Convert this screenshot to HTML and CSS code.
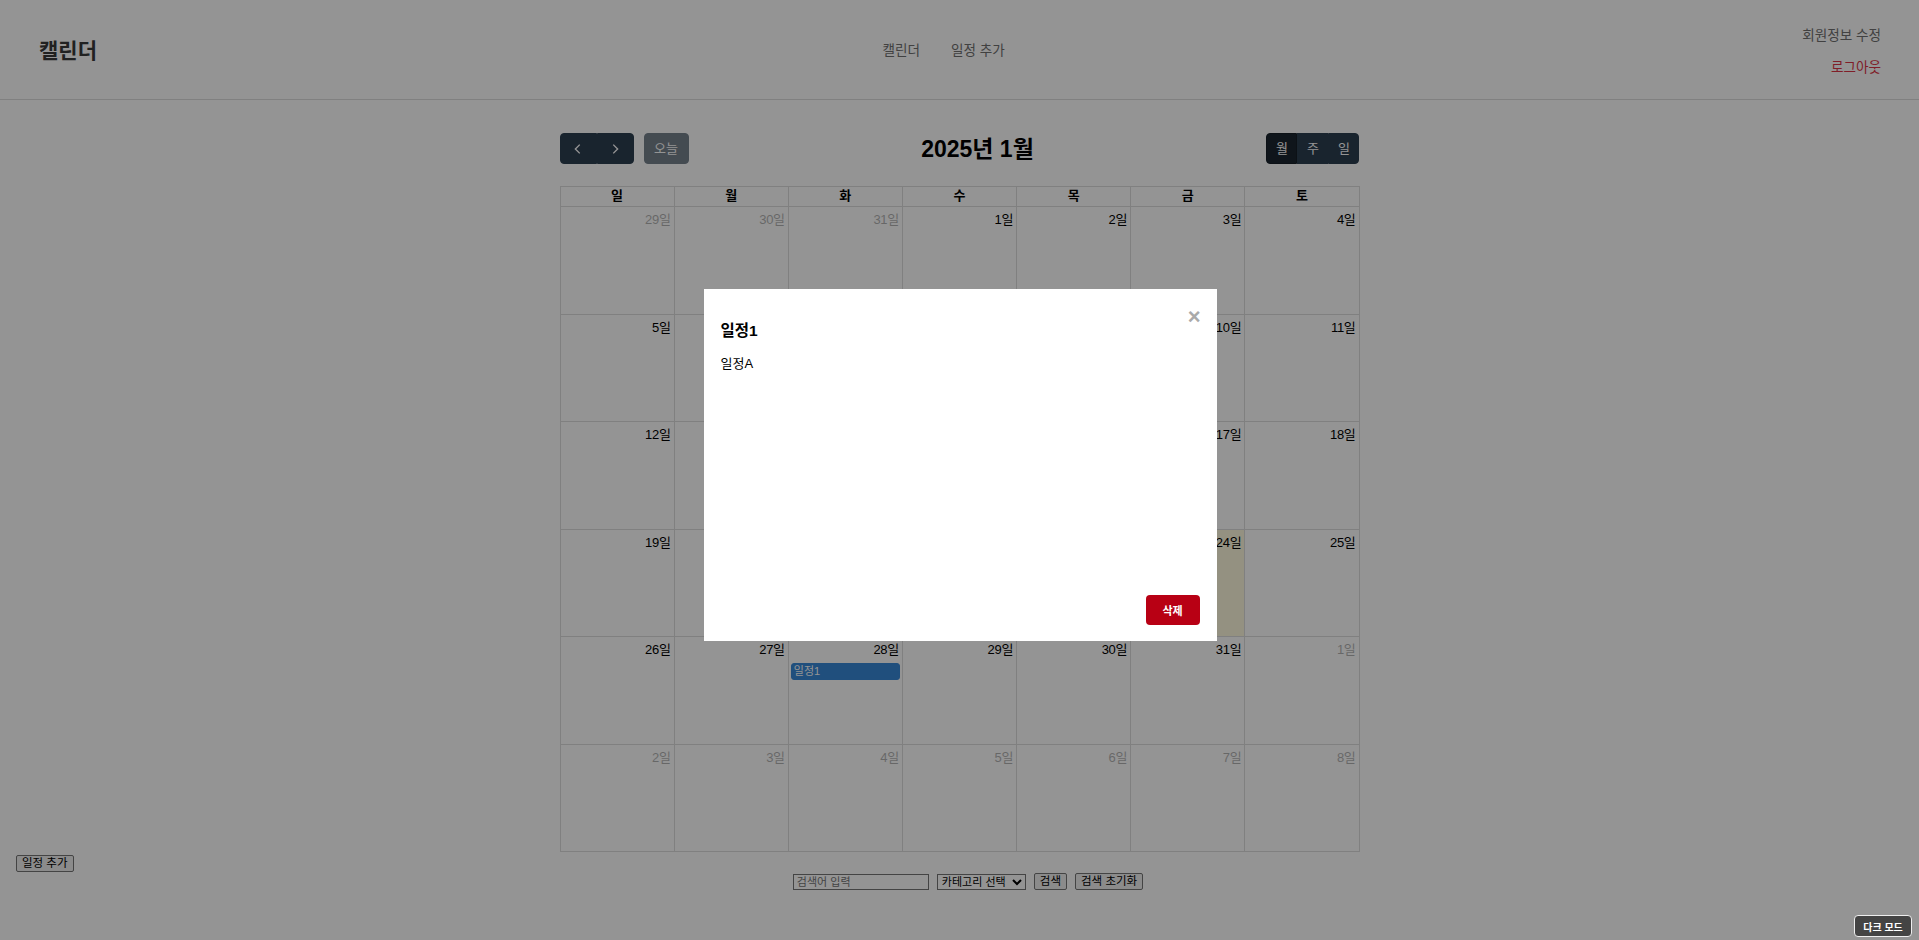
FILE: index.html
```html
<!DOCTYPE html>
<html lang="ko">
<head>
<meta charset="utf-8">
<title>캘린더</title>
<link rel="stylesheet" href="styles.css">
</head>
<body>
<header class="topbar">
  <div class="logo">캘린더</div>
  <nav class="mainnav">
    <a href="#">캘린더</a>
    <a href="#">일정 추가</a>
  </nav>
  <div class="usernav">
    <a href="#" class="edit">회원정보 수정</a>
    <a href="#" class="logout">로그아웃</a>
  </div>
</header>

<main class="page">
  <div class="calendar">
    <div class="toolbar">
      <div class="tb-left">
        <div class="btn-group">
          <button class="fc-btn icon-btn"><svg width="14" height="14" viewBox="0 0 16 16"><path d="M10 3 5 8l5 5" fill="none" stroke="currentColor" stroke-width="1.6"/></svg></button>
          <button class="fc-btn icon-btn"><svg width="14" height="14" viewBox="0 0 16 16"><path d="M6 3l5 5-5 5" fill="none" stroke="currentColor" stroke-width="1.6"/></svg></button>
        </div>
        <button class="fc-btn today-btn" disabled>오늘</button>
      </div>
      <h2 class="cal-title">2025년 1월</h2>
      <div class="btn-group views">
        <button class="fc-btn active">월</button>
        <button class="fc-btn">주</button>
        <button class="fc-btn">일</button>
      </div>
    </div>

    <div class="month">
      <div class="dow">일</div><div class="dow">월</div><div class="dow">화</div><div class="dow">수</div><div class="dow">목</div><div class="dow">금</div><div class="dow">토</div>

      <div class="day other"><span class="num">29일</span></div>
      <div class="day other"><span class="num">30일</span></div>
      <div class="day other"><span class="num">31일</span></div>
      <div class="day"><span class="num">1일</span></div>
      <div class="day"><span class="num">2일</span></div>
      <div class="day"><span class="num">3일</span></div>
      <div class="day"><span class="num">4일</span></div>

      <div class="day"><span class="num">5일</span></div>
      <div class="day"><span class="num">6일</span></div>
      <div class="day"><span class="num">7일</span></div>
      <div class="day"><span class="num">8일</span></div>
      <div class="day"><span class="num">9일</span></div>
      <div class="day"><span class="num">10일</span></div>
      <div class="day"><span class="num">11일</span></div>

      <div class="day"><span class="num">12일</span></div>
      <div class="day"><span class="num">13일</span></div>
      <div class="day"><span class="num">14일</span></div>
      <div class="day"><span class="num">15일</span></div>
      <div class="day"><span class="num">16일</span></div>
      <div class="day"><span class="num">17일</span></div>
      <div class="day"><span class="num">18일</span></div>

      <div class="day"><span class="num">19일</span></div>
      <div class="day"><span class="num">20일</span></div>
      <div class="day"><span class="num">21일</span></div>
      <div class="day"><span class="num">22일</span></div>
      <div class="day"><span class="num">23일</span></div>
      <div class="day today"><span class="num">24일</span></div>
      <div class="day"><span class="num">25일</span></div>

      <div class="day"><span class="num">26일</span></div>
      <div class="day"><span class="num">27일</span></div>
      <div class="day"><span class="num">28일</span><div class="event">일정1</div></div>
      <div class="day"><span class="num">29일</span></div>
      <div class="day"><span class="num">30일</span></div>
      <div class="day"><span class="num">31일</span></div>
      <div class="day other"><span class="num">1일</span></div>

      <div class="day other"><span class="num">2일</span></div>
      <div class="day other"><span class="num">3일</span></div>
      <div class="day other"><span class="num">4일</span></div>
      <div class="day other"><span class="num">5일</span></div>
      <div class="day other"><span class="num">6일</span></div>
      <div class="day other"><span class="num">7일</span></div>
      <div class="day other"><span class="num">8일</span></div>
    </div>
  </div>

  <div class="add-row">
    <button class="plain-btn">일정 추가</button>
  </div>

  <div class="search-row">
    <input class="search-input" type="text" placeholder="검색어 입력">
    <select class="cat-select">
      <option>카테고리 선택</option>
    </select>
    <button class="plain-btn">검색</button>
    <button class="plain-btn">검색 초기화</button>
  </div>
</main>

<div class="overlay">
  <div class="modal">
    <span class="close">×</span>
    <h3 class="modal-title">일정1</h3>
    <p class="modal-desc">일정A</p>
    <div class="modal-foot">
      <button class="delete-btn">삭제</button>
    </div>
  </div>
</div>

<button class="dark-toggle">다크 모드</button>
</body>
</html>
```

FILE: styles.css
```css
* { box-sizing: border-box; }

html, body {
  margin: 0;
  padding: 0;
  background: #fff;
}

body {
  font-family: "Liberation Sans", "Noto Sans CJK KR", Arial, sans-serif;
  color: #000;
  font-size: 13px;
  height: 940px;
  overflow: hidden;
}

/* header */
.topbar {
  height: 100px;
  border-bottom: 1px solid #ddd;
  display: flex;
  align-items: center;
  justify-content: space-between;
  padding: 2px 38px 0 39px;
  background: #fff;
}

.logo {
  font-size: 21px;
  font-weight: bold;
  color: #3a3a3a;
  line-height: 24px;
}

.mainnav {
  display: flex;
  gap: 31px;
  margin-right: 12px;
}

.mainnav a,
.usernav a {
  font-size: 13.6px;
  line-height: 18px;
  color: #707070;
  text-decoration: none;
}

.usernav {
  display: flex;
  flex-direction: column;
  align-items: flex-end;
  gap: 14px;
  margin-top: 2px;
}

.usernav .logout {
  color: #dc3545;
}

/* page */
.page {
  padding-top: 33px;
}

.calendar {
  width: 800px;
  margin: 0 auto;
}

.toolbar {
  display: flex;
  align-items: center;
  justify-content: space-between;
  height: 31px;
  margin-bottom: 22px;
}

.tb-left {
  display: flex;
  align-items: center;
  gap: 10px;
}

.btn-group {
  display: flex;
}

.fc-btn {
  height: 31px;
  min-width: 31px;
  padding: 0 8px;
  border: 1px solid #2c3e50;
  background: #2c3e50;
  color: #fff;
  font-family: "Liberation Sans", "Noto Sans CJK KR", sans-serif;
  font-size: 13px;
  line-height: 1;
  border-radius: 0;
  display: flex;
  align-items: center;
  justify-content: center;
}

.btn-group .fc-btn:first-child { border-radius: 4px 0 0 4px; }
.btn-group .fc-btn:last-child { border-radius: 0 4px 4px 0; }

.icon-btn {
  width: 37px;
}

.today-btn {
  width: 45px;
  border-radius: 4px;
  opacity: 0.65;
}

.views .fc-btn {
  width: 31px;
  padding: 0;
}

.views .fc-btn.active {
  background: #1a252f;
  border-color: #151e27;
}

.cal-title {
  margin: 0;
  font-size: 23px;
  font-weight: bold;
  line-height: 31px;
  position: relative;
  top: 1px;
}

.month {
  display: grid;
  grid-template-columns: repeat(7, 1fr);
  grid-template-rows: 20px repeat(6, 1fr);
  height: 666px;
  border-top: 1px solid #ddd;
  border-left: 1px solid #ddd;
}

.dow,
.day {
  border-right: 1px solid #ddd;
  border-bottom: 1px solid #ddd;
}

.dow {
  text-align: center;
  font-weight: bold;
  font-size: 13px;
  line-height: 18px;
}

.day {
  display: flex;
  flex-direction: column;
  align-items: stretch;
  padding: 3px 0 0;
}

.day .num {
  align-self: flex-end;
  padding: 1px 3px;
  font-size: 13px;
  line-height: 17px;
  letter-spacing: -0.3px;
}

.day.other .num {
  opacity: 0.3;
}

.day.today {
  background: rgba(255, 220, 40, 0.15);
}

.event {
  margin: 4px 2px 0;
  background: #3788d8;
  border: 1px solid #3788d8;
  border-radius: 3px;
  color: #fff;
  font-size: 11px;
  line-height: 15px;
  padding: 0 2px;
}

.add-row {
  padding: 3px 16px 0;
}

.plain-btn {
  font-family: "Liberation Sans", "Noto Sans CJK KR", sans-serif;
  font-size: 11.5px;
  line-height: 13px;
  padding: 1px 5px;
  background: #efefef;
  border: 1px solid #767676;
  border-radius: 2px;
  color: #000;
}

.search-row {
  display: flex;
  justify-content: center;
  align-items: center;
  gap: 8px;
  padding-left: 17px;
  margin-top: 1px;
}

.search-input {
  width: 136px;
  height: 16px;
  font-family: "Liberation Sans", "Noto Sans CJK KR", sans-serif;
  font-size: 11px;
  padding: 0 3px;
  border: 1px solid #767676;
  border-radius: 0;
}

.search-input::placeholder {
  color: #757575;
}

.cat-select {
  width: 89px;
  height: 16px;
  font-family: "Liberation Sans", "Noto Sans CJK KR", sans-serif;
  font-size: 11px;
  padding: 0;
  border: 1px solid #767676;
  border-radius: 0;
  background: #fff;
  color: #000;
}

/* modal */
.overlay {
  position: fixed;
  inset: 0;
  background: rgba(0, 0, 0, 0.42);
  display: flex;
  align-items: center;
  justify-content: center;
  z-index: 10;
}

.modal {
  position: relative;
  width: 513px;
  height: 352px;
  margin-bottom: 10px;
  margin-left: 1px;
  background: #fff;
  padding: 24px 17px 16px;
  display: flex;
  flex-direction: column;
}

.close {
  position: absolute;
  top: 17px;
  right: 16px;
  font-size: 22px;
  font-weight: bold;
  line-height: 22px;
  color: #aaa;
}

.modal-title {
  margin: 0;
  font-size: 15.5px;
  font-weight: bold;
  line-height: 20px;
  margin-top: 8px;
}

.modal-desc {
  margin: 14px 0 0;
  font-size: 13px;
  line-height: 18px;
  flex: 1;
}

.modal-foot {
  display: flex;
  justify-content: flex-end;
}

.delete-btn {
  width: 54px;
  height: 30px;
  background: #b80014;
  color: #fff;
  border: none;
  border-radius: 4px;
  font-family: "Liberation Sans", "Noto Sans CJK KR", sans-serif;
  font-size: 11px;
  font-weight: bold;
}

.dark-toggle {
  position: fixed;
  right: 7px;
  bottom: 3px;
  z-index: 20;
  width: 58px;
  height: 22px;
  padding: 0;
  background: #444;
  color: #fff;
  border: 1px solid #eee;
  border-radius: 4px;
  font-family: "Liberation Sans", "Noto Sans CJK KR", sans-serif;
  font-size: 10px;
  font-weight: bold;
}
```
